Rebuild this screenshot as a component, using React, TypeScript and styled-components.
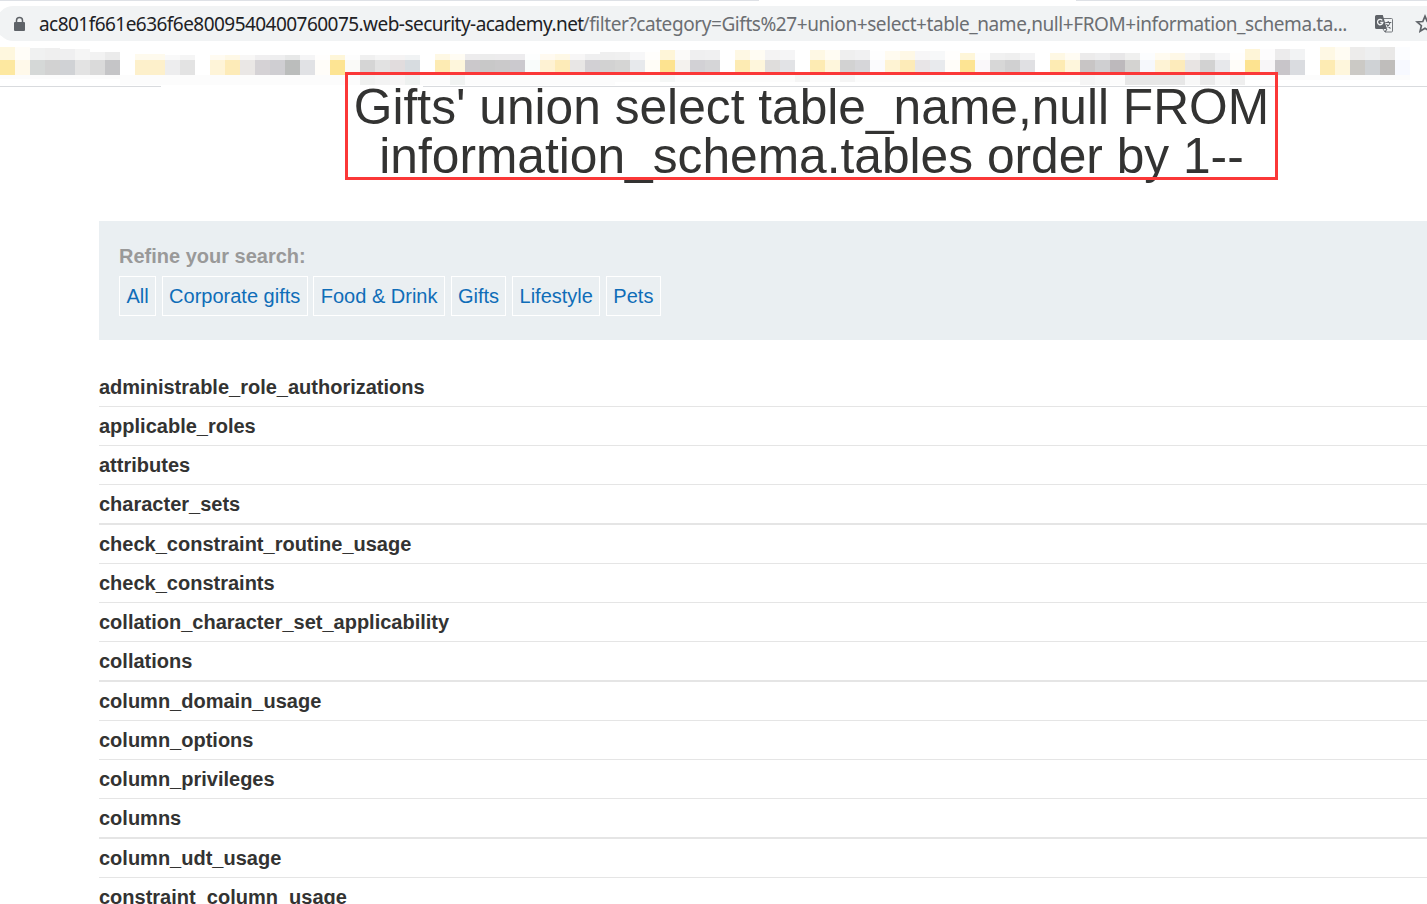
import React from 'react';
import styled, { createGlobalStyle } from 'styled-components';

const GlobalStyle = createGlobalStyle`
  * { box-sizing: border-box; }
  body {
    margin: 0;
    background: #fff;
    color: #333332;
    font-family: "Liberation Sans", Arial, sans-serif;
    overflow: hidden;
  }
`;

const Page = styled.div`
  position: relative;
  width: 100%;
  height: 904px;
  overflow: hidden;
`;

const TabEdge = styled.div`
  display: flex;
  justify-content: space-between;
  height: 6px;
`;

const EdgeLine = styled.span<{ $width: number; $color?: string }>`
  width: ${(p) => p.$width}px;
  height: 1px;
  background: ${(p) => p.$color ?? '#dee1e6'};
`;

const AddressBar = styled.div`
  display: flex;
  align-items: center;
  height: 35px;
  margin-left: -4px;
  padding-left: 17px;
  border-radius: 18px 0 0 18px;
  background: #f1f3f4;
`;

const LockIcon = styled.svg`
  flex: none;
  width: 13px;
  height: 16px;
  margin-right: 13px;
`;

const Url = styled.div`
  flex: none;
  display: flex;
  width: 1336px;
  font: 400 19px/34px "Noto Sans", sans-serif;
  white-space: pre;
`;

const UrlHost = styled.span`
  width: 543.5px;
  color: #202124;
  letter-spacing: -0.54px;
`;

const UrlPath = styled.span`
  color: #6b6e72;
  letter-spacing: -0.42px;
`;

const TranslateIcon = styled.svg`
  flex: none;
  width: 18px;
  height: 18px;
`;

const StarIcon = styled.svg`
  flex: none;
  width: 20px;
  height: 20px;
  margin-left: 22px;
`;

const Bookmarks = styled.div`
  display: flex;
  height: 45px;
`;

const Divider = styled.div`
  display: flex;
  justify-content: space-between;
`;

const Column = styled.div`
  flex: none;
  display: flex;
  flex-direction: column;
  justify-content: flex-end;
  width: 15px;
`;

const Tile = styled.span<{ $color: string; $height: number; $fade?: number }>`
  flex: none;
  height: ${(p) => p.$height}px;
  background: ${(p) => p.$color};
  opacity: ${(p) => p.$fade ?? 1};
`;

const Main = styled.main`
  width: 1425px;
  margin: -4px 0 0 99px;
`;

const Title = styled.h1`
  position: relative;
  margin: 0 0 40px;
  font-size: 49.7px;
  line-height: 49px;
  font-weight: 400;
  text-align: center;
`;

const Highlight = styled.div`
  position: absolute;
  left: 345px;
  top: 72px;
  width: 933px;
  height: 108px;
  border: 3px solid #fb3838;
`;

const Filters = styled.section`
  height: 119px;
  padding: 20px;
  background: #eaeff2;
`;

const FilterLabel = styled.div`
  height: 35px;
  font-size: 20px;
  line-height: 31px;
  font-weight: 700;
  color: #999;
`;

const FilterList = styled.nav`
  display: flex;
  gap: 5.7px;
`;

const FilterLink = styled.a`
  height: 40px;
  padding: 0 6.4px;
  border: 1px solid #fff;
  font-size: 20px;
  line-height: 38px;
  color: #0f6db8;
  white-space: nowrap;
`;

const Table = styled.div`
  display: flex;
  flex-direction: column;
  margin-top: 28px;
`;

const Row = styled.div<{ $thick: boolean }>`
  flex: none;
  height: ${(p) => (p.$thick ? 40 : 39)}px;
  border-bottom: ${(p) => (p.$thick ? 2 : 1)}px solid #e5e5e5;
  font-size: 20px;
  line-height: 38px;
  font-weight: 700;
`;

const tiles = (
  'fde8a0 fff9ea d5d8d7 d2d2d2 d0d2d5 e3e3e3 dadada c5c5c7 ffffff fdf0cb fdf0cb ededee e3e3e3 ffffff ' +
  'fef4d8 fdebb8 eae7e5 d5d2d5 cfced2 bbbdbc e1e2e5 fffdf9 fde493 fafaf8 d5d5d5 e2e2e2 e1dcdd d7dce0 ffffff ' +
  'fdebb3 fef6dc cbc8cb c8c8c8 cac9ca cbc9ce f9fcfb fef2d3 fdebb8 e8e6e5 d2d0d4 d2d2d2 d5d5d4 e7e9ec fffdf7 ' +
  'fde390 f4f2ee d2d1d5 d5d5d7 ffffff fdebb3 fef6dc dfdddc e2e3e6 ffffff fdebb3 fef6dc d2d2d2 d6d6d9 fbfbfd ' +
  'fef3d3 fdebb8 e8e5e7 e8eaed fffdf9 fde493 faf8fa d7d7d7 d0d0d1 e0e0e3 ffffff fdebb3 fef6dc c8c5c5 cfcfd1 ' +
  'bdb9bc d4d3d1 f6f8fc fef3d5 fdebbb e8e4e3 d2d2d2 e7e8eb fffdf9 fde390 f8f6f8 c8c5c9 dadce0 ffffff fdebb3 ' +
  'fef6dc cbc9c5 cfd2d5 bfbdbb f7f9ff'
).split(' ');

const topHeight = (i: number) => {
  if (i < 2) return 13;
  if (i < 4) return 12;
  if (i < 6) return 11;
  if (i < 8) return 8;
  if (i < 11) return 6;
  if (i < 29) return 5;
  if (i < 40) return 6;
  if (i < 44) return 8;
  if (i < 58) return 10;
  if (i < 64) return 9;
  if (i < 83) return 7;
  if (i < 88) return 11;
  return 13;
};

const lowerShades: Record<number, string> = {
  24: '#f0f1f0', 25: '#f3f3f3', 26: '#f6f5f5', 27: '#eef1f0',
  30: '#f1f3f2', 44: '#f5f7f6', 53: '#f5f5f5', 56: '#f5f5f5',
  72: '#f5f5f5', 73: '#f8f8f8', 74: '#fcfcfc', 75: '#e7e7e7', 76: '#e7e7e7',
  77: '#e7e7e7', 78: '#e7e7e7', 79: '#f8f8f8', 80: '#ebebeb', 81: '#f8f8f8', 82: '#efefef',
};

const lowerHeight = (i: number) => {
  if (i < 8) return 4;
  if (i > 82) return 5;
  return i > 40 && i < 72 ? 7 : 10;
};

const categories = ['All', 'Corporate gifts', 'Food & Drink', 'Gifts', 'Lifestyle', 'Pets'];

const tables = [
  'administrable_role_authorizations',
  'applicable_roles',
  'attributes',
  'character_sets',
  'check_constraint_routine_usage',
  'check_constraints',
  'collation_character_set_applicability',
  'collations',
  'column_domain_usage',
  'column_options',
  'column_privileges',
  'columns',
  'column_udt_usage',
  'constraint_column_usage',
];

export default function App() {
  return (
    <Page>
      <GlobalStyle />
      <TabEdge>
        <EdgeLine $width={759} />
        <EdgeLine $width={351} />
      </TabEdge>
      <AddressBar>
        <LockIcon viewBox="0 0 13 16">
          <path d="M3.5 7V4.6a3 3 0 0 1 6 0V7" fill="none" stroke="#5f6368" strokeWidth="1.5" />
          <rect x="1" y="6" width="11" height="9" rx="1" fill="#5f6368" />
        </LockIcon>
        <Url>
          <UrlHost>ac801f661e636f6e8009540400760075.web-security-academy.net</UrlHost>
          <UrlPath>/filter?category=Gifts%27+union+select+table_name,null+FROM+information_schema.ta...</UrlPath>
        </Url>
        <TranslateIcon viewBox="0 0 18 18">
          <path d="M8 3.5h8.5a1 1 0 0 1 1 1v11.5a1 1 0 0 1-1 1H10l-2-3" fill="#f1f3f4" stroke="#777b7f" />
          <path d="M1.5 0h6.300l4.100 14H1.500A1.500 1.500 0 0 1 0 12.500v-11A1.500 1.500 0 0 1 1.500 0z" fill="#5f6368" />
          <path d="M7.300 5.300A2.700 2.700 0 1 0 7.900 7.500H5.300" fill="none" stroke="#f1f3f4" strokeWidth="1.300" />
          <path d="M10.300 7.500h6M13.200 6v1.500M15 7.500c-.5 2.500-2 4-3.500 5M11.500 9c1 2 2.500 3.500 4 4.500M12 14l-2 3" fill="none" stroke="#5f6368" strokeWidth="1.100" />
        </TranslateIcon>
        <StarIcon viewBox="0 0 20 20">
          <path d="M10 2.200l2.200 5.300 5.700.5-4.300 3.700 1.300 5.600-4.900-3-4.900 3 1.300-5.600L2.100 8l5.700-.5z" fill="none" stroke="#5f6368" strokeWidth="1.700" />
        </StarIcon>
      </AddressBar>
      <Bookmarks>
        {tiles.map((color, i) => (
          <Column key={i}>
            <Tile $color={`#${color}`} $height={topHeight(i)} $fade={0.35} />
            <Tile $color={`#${color}`} $height={15} />
            <Tile $color={lowerShades[i] ?? '#fcfcfc'} $height={lowerHeight(i)} />
            <Tile $color="#fff" $height={11 - lowerHeight(i)} />
          </Column>
        ))}
      </Bookmarks>
      <Divider>
        <EdgeLine $width={161} $color="#d9dbde" />
        <EdgeLine $width={1004} $color="#d9dbde" />
      </Divider>
      <Main>
        <Title>
          Gifts' union select table_name,null FROM
          <br />
          information_schema.tables order by 1--
        </Title>
        <Filters>
          <FilterLabel>Refine your search:</FilterLabel>
          <FilterList>
            {categories.map((name) => (
              <FilterLink key={name}>{name}</FilterLink>
            ))}
          </FilterList>
        </Filters>
        <Table>
          {tables.map((name, i) => (
            <Row key={name} $thick={i % 4 === 3}>{name}</Row>
          ))}
        </Table>
      </Main>
      <Highlight />
    </Page>
  );
}
